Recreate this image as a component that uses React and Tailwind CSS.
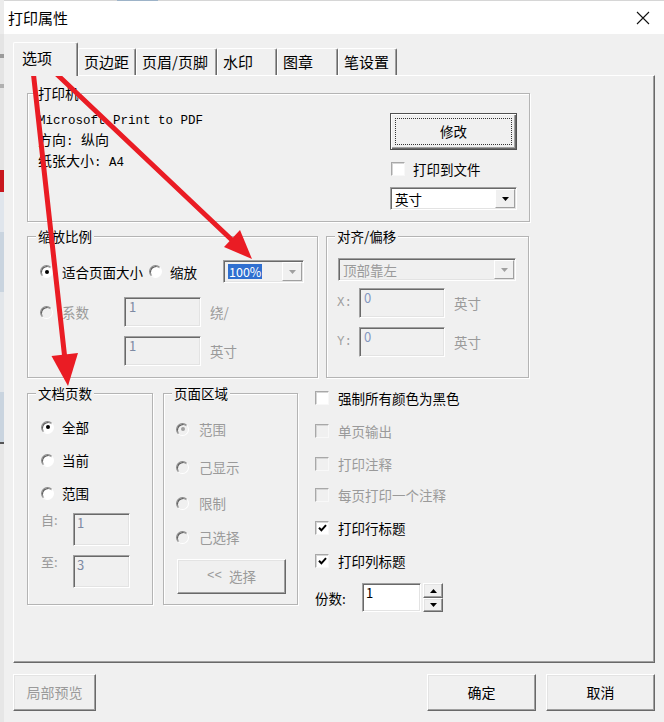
import React from "react";

const Radio = ({ checked, disabled }) => (
  <span
    className={`inline-flex h-[13px] w-[13px] shrink-0 items-center justify-center rounded-full border border-t-[#8a8a8a] border-l-[#8a8a8a] border-b-white border-r-white shadow-[inset_1px_1px_0_#5f5f5f] ${
      disabled ? "bg-[#f0f0f0]" : "bg-white"
    }`}
  >
    {checked && (
      <span className={`h-[4px] w-[4px] rounded-full ${disabled ? "bg-[#a0a0a0]" : "bg-black"}`} />
    )}
  </span>
);

const Check = ({ checked, disabled }) => (
  <span
    className={`inline-flex h-[14px] w-[14px] shrink-0 items-center justify-center border border-t-[#a8a8a8] border-l-[#a8a8a8] border-b-[#f8f8f8] border-r-[#f8f8f8] shadow-[inset_1px_1px_0_#d6d6d6] ${
      disabled ? "bg-[#f0f0f0]" : "bg-white"
    }`}
  >
    {checked && (
      <svg width="9" height="8" viewBox="0 0 9 8">
        <path d="M1 3.8 L3.4 6.3 L8 1.2" stroke="#000" strokeWidth="2" fill="none" />
      </svg>
    )}
  </span>
);

const Sunken = ({ className, white, children }) => (
  <div
    className={`shrink-0 border border-t-[#a0a0a0] border-l-[#a0a0a0] border-b-white border-r-white shadow-[inset_1px_1px_0_#696969,inset_-1px_-1px_0_#e3e3e3] ${
      white ? "bg-white" : "bg-[#f0f0f0]"
    } ${className}`}
  >
    {children}
  </div>
);

const Raised = ({ className, children }) => (
  <div
    className={`flex shrink-0 items-center justify-center border border-t-white border-l-white border-b-[#696969] border-r-[#696969] bg-[#f0f0f0] shadow-[inset_-1px_-1px_0_#a0a0a0,inset_1px_1px_0_#e3e3e3] ${className}`}
  >
    {children}
  </div>
);

const DropBtn = ({ disabled }) => (
  <span className="ml-auto flex h-full w-[20px] shrink-0 items-center justify-center border border-t-white border-l-white border-b-[#a0a0a0] border-r-[#a0a0a0] bg-[#f0f0f0]">
    <svg width="7" height="4" viewBox="0 0 7 4">
      <path d="M0 0H7L3.5 4Z" fill={disabled ? "#a0a0a0" : "#000"} />
    </svg>
  </span>
);

const Group = ({ title, className, children }) => (
  <div
    className={`relative shrink-0 border border-[#b4b4b4] shadow-[inset_1px_1px_0_#fff,1px_1px_0_#fff] ${className}`}
  >
    <span className="absolute -top-[11px] left-[8px] bg-[#f0f0f0] px-[2px] text-[13.5px] leading-[20px] text-black">
      {title}
    </span>
    {children}
  </div>
);

const Tab = ({ label, selected, className }) => (
  <div
    className={`flex shrink-0 items-center rounded-t-[2px] border-l border-t border-r border-l-white border-t-white border-r-[#696969] bg-[#f0f0f0] text-[15px] shadow-[inset_-1px_0_0_#a0a0a0] ${
      selected ? "relative z-10 -mb-[1px] h-[34px] pb-[3px] pl-[8px]" : "h-[27px] pl-[5px]"
    } ${className}`}
  >
    {label}
  </div>
);

const CheckRow = ({ label, checked, disabled, className }) => (
  <div className={`flex h-[20px] items-center ${className}`}>
    <Check checked={checked} disabled={disabled} />
    <span className={`ml-[9px] text-[13.5px] leading-[20px] ${disabled ? "text-[#9a9a9a]" : "text-black"}`}>
      {label}
    </span>
  </div>
);

const RadioRow = ({ label, checked, disabled, gap, className }) => (
  <div className={`flex h-[20px] items-center ${className}`}>
    <Radio checked={checked} disabled={disabled} />
    <span
      className={`text-[13.5px] leading-[20px] ${gap ? "ml-[10px]" : "ml-[8px]"} ${
        disabled ? "text-[#9a9a9a]" : "text-black"
      }`}
    >
      {label}
    </span>
  </div>
);

const mono = "font-['Liberation_Mono','Noto_Sans_CJK_SC',monospace]";

export default function App() {
  return (
    <div className="relative flex h-[722px] w-[664px] overflow-hidden bg-[#f0f0f0] font-['Noto_Sans_CJK_SC','Noto_Sans',sans-serif] text-black">
      {/* app behind the dialog */}
      <div className="flex w-[4px] shrink-0 flex-col bg-[#e4e4e4]">
        <div className="h-[34px] bg-[#ececec]" />
        <div className="mt-[20px] h-[4px] bg-[#9a9a9a]" />
        <div className="mt-[26px] h-[4px] bg-[#b0b0b0]" />
        <div className="mt-[82px] h-[22px] bg-[#c8161d]" />
        <div className="h-[40px] bg-[#dfe5ec]" />
        <div className="h-[60px] bg-[#c9d4df]" />
        <div className="h-[100px] bg-[#e2e6ea]" />
        <div className="h-[50px] bg-[#c9d4df]" />
        <div className="h-[2px] bg-[#555]" />
        <div className="flex-1 bg-[#e6e6e6]" />
      </div>

      <div className="flex flex-1 flex-col">
        {/* title bar */}
        <div className="flex h-[1px] bg-[#d6d6d6]">
          <span className="ml-[113px] w-[41px] bg-[#9db3c8]" />
        </div>
        <div className="flex h-[33px] items-center justify-between bg-white pl-[4px] pr-[14px]">
          <span className="text-[15px] leading-[20px]">打印属性</span>
          <svg width="14" height="14" viewBox="0 0 14 14">
            <path d="M1 1L13 13M13 1L1 13" stroke="#111" strokeWidth="1.1" />
          </svg>
        </div>

        {/* dialog body */}
        <div className="flex flex-1 flex-col px-[9px] pt-[8px]">
          {/* tabs */}
          <div className="relative z-10 flex h-[33px] items-end">
            <Tab label="选项" selected className="w-[65px]" />
            <Tab label="页边距" className="w-[58px]" />
            <Tab label="页眉/页脚" className="w-[81px]" />
            <Tab label="水印" className="w-[60px]" />
            <Tab label="图章" className="w-[61px]" />
            <Tab label="笔设置" className="w-[59px]" />
          </div>

          {/* tab panel */}
          <div className="flex h-[588px] flex-col border border-l-white border-t-white border-r-[#696969] border-b-[#696969] pl-[13px] pt-[17px] shadow-[inset_-1px_-1px_0_#a0a0a0]">
            {/* 打印机 */}
            <Group title="打印机" className="h-[129px] w-[503px]">
              <div className="flex pl-[10px] pt-[19px]">
                <div className={`-mt-[2px] w-[352px] text-[12.5px] leading-[20px] ${mono}`}>
                  <div>Microsoft Print to PDF</div>
                  <div>
                    <span className="text-[14px]">方向</span>: <span className="text-[14px]">纵向</span>
                  </div>
                  <div>
                    <span className="text-[14px]">纸张大小</span>: A4
                  </div>
                </div>
                <div className="flex w-[127px] flex-col">
                  <div className="relative flex h-[37px] w-[127px] items-center justify-center border border-[#4f4f4f] bg-[#f0f0f0] text-[13.5px] shadow-[inset_1px_1px_0_#fff,inset_-1px_-1px_0_#696969,inset_-2px_-2px_0_#a0a0a0]">
                    <span className="pointer-events-none absolute inset-[4px] border border-dotted border-[#333]" />
                    修改
                  </div>
                  <div className="mt-[12px] flex h-[14px] items-center pl-[1px]">
                    <Check />
                    <span className="ml-[8px] text-[13.5px] leading-[20px]">打印到文件</span>
                  </div>
                  <Sunken white className="mt-[11px] flex h-[23px] w-[127px] items-center p-[1px]">
                    <span className="pl-[3px] text-[13.5px] leading-[18px]">英寸</span>
                    <DropBtn />
                  </Sunken>
                </div>
              </div>
            </Group>

            {/* row 2 */}
            <div className="mt-[14px] flex gap-[8px]">
              <Group title="缩放比例" className="h-[142px] w-[291px]">
                <div className="ml-[12px] mt-[23px] flex h-[23px] items-center">
                  <Radio checked />
                  <span className="ml-[9px] w-[87px] text-[13.5px] leading-[20px]">适合页面大小</span>
                  <Radio />
                  <span className="ml-[8px] w-[53px] text-[13.5px] leading-[20px]">缩放</span>
                  <Sunken className="flex h-[23px] w-[81px] items-center p-[1px]">
                    <span className="ml-[3px] bg-[#2f6fd0] px-[1px] text-[12.5px] leading-[15px] text-white">
                      100%
                    </span>
                    <DropBtn disabled />
                  </Sunken>
                </div>
                <div className="ml-[12px] mt-[14px] flex items-center">
                  <Radio disabled />
                  <span className="ml-[9px] w-[62px] text-[13.5px] leading-[20px] text-[#9a9a9a]">系数</span>
                  <Sunken className="h-[30px] w-[77px] pl-[4px] text-[13px] leading-[17px] text-[#7d8aa3]">1</Sunken>
                  <span className="ml-[9px] text-[13.5px] leading-[20px] text-[#9a9a9a]">绕/</span>
                </div>
                <div className="ml-[96px] mt-[9px] flex items-center">
                  <Sunken className="h-[30px] w-[77px] pl-[4px] text-[13px] leading-[17px] text-[#7d8aa3]">1</Sunken>
                  <span className="ml-[9px] text-[13.5px] leading-[20px] text-[#9a9a9a]">英寸</span>
                </div>
              </Group>

              <Group title="对齐/偏移" className="h-[142px] w-[203px]">
                <Sunken className="ml-[11px] mt-[21px] flex h-[23px] w-[178px] items-center p-[1px]">
                  <span className="pl-[3px] text-[13.5px] leading-[18px] text-[#9a9a9a]">顶部靠左</span>
                  <DropBtn disabled />
                </Sunken>
                <div className="ml-[10px] mt-[7px] flex items-center">
                  <span className={`w-[22px] text-[12.5px] text-[#a0a0a0] ${mono}`}>X:</span>
                  <Sunken className="h-[30px] w-[86px] pl-[4px] text-[13px] leading-[17px] text-[#8498c0]">0</Sunken>
                  <span className="ml-[9px] text-[13.5px] leading-[20px] text-[#9a9a9a]">英寸</span>
                </div>
                <div className="ml-[10px] mt-[9px] flex items-center">
                  <span className={`w-[22px] text-[12.5px] text-[#a0a0a0] ${mono}`}>Y:</span>
                  <Sunken className="h-[30px] w-[86px] pl-[4px] text-[13px] leading-[17px] text-[#8498c0]">0</Sunken>
                  <span className="ml-[9px] text-[13.5px] leading-[20px] text-[#9a9a9a]">英寸</span>
                </div>
              </Group>
            </div>

            {/* row 3 */}
            <div className="mt-[15px] flex">
              <Group title="文档页数" className="h-[212px] w-[126px]">
                <div className="flex flex-col pl-[13px] pt-[23px]">
                  <RadioRow label="全部" checked />
                  <RadioRow label="当前" className="mt-[13px]" />
                  <RadioRow label="范围" className="mt-[13px]" />
                  <div className="mt-[10px] flex items-start">
                    <span className="-mt-[1px] w-[32px] text-[13px] leading-[16px] text-[#9a9a9a]">自:</span>
                    <Sunken className="h-[33px] w-[57px] pl-[3px] text-[13px] leading-[17px] text-[#7d8aa3]">1</Sunken>
                  </div>
                  <div className="mt-[9px] flex items-start">
                    <span className="-mt-[1px] w-[32px] text-[13px] leading-[16px] text-[#9a9a9a]">至:</span>
                    <Sunken className="h-[33px] w-[57px] pl-[3px] text-[13px] leading-[17px] text-[#7d8aa3]">3</Sunken>
                  </div>
                </div>
              </Group>

              <Group title="页面区域" className="ml-[10px] h-[212px] w-[135px]">
                <div className="flex flex-col pl-[12px] pt-[25px]">
                  <RadioRow label="范围" checked disabled gap />
                  <RadioRow label="己显示" disabled gap className="mt-[18px]" />
                  <RadioRow label="限制" disabled gap className="mt-[16px]" />
                  <RadioRow label="己选择" disabled gap className="mt-[14px]" />
                  <Raised className="ml-[1px] mt-[12px] h-[35px] w-[109px] gap-[7px] text-[13.5px] text-[#9a9a9a]">
                    <span className={`${mono} text-[12.5px]`}>&lt;&lt;</span>
                    <span>选择</span>
                  </Raised>
                </div>
              </Group>

              <div className="-mt-[5px] ml-[17px] flex flex-col">
                <CheckRow label="强制所有颜色为黑色" />
                <CheckRow label="单页输出" disabled className="mt-[13px]" />
                <CheckRow label="打印注释" disabled className="mt-[13px]" />
                <CheckRow label="每页打印一个注释" disabled className="mt-[11px]" />
                <CheckRow label="打印行标题" checked className="mt-[13px]" />
                <CheckRow label="打印列标题" checked className="mt-[13px]" />
                <div className="mt-[12px] flex h-[29px] items-center">
                  <span className="w-[47px] text-[13.5px] leading-[20px]">份数:</span>
                  <Sunken white className="h-[29px] w-[59px] pl-[3px] text-[13px] leading-[18px]">1</Sunken>
                  <div className="ml-[2px] flex h-[29px] w-[20px] flex-col">
                    <Raised className="h-[15px] w-[20px]">
                      <svg width="7" height="4" viewBox="0 0 7 4">
                        <path d="M0 4H7L3.5 0Z" fill="#000" />
                      </svg>
                    </Raised>
                    <Raised className="h-[14px] w-[20px]">
                      <svg width="7" height="4" viewBox="0 0 7 4">
                        <path d="M0 0H7L3.5 4Z" fill="#000" />
                      </svg>
                    </Raised>
                  </div>
                </div>
              </div>
            </div>
          </div>

          {/* bottom buttons */}
          <div className="mt-[11px] flex h-[37px]">
            <Raised className="h-[37px] w-[83px] text-[14px] text-[#9a9a9a]">局部预览</Raised>
            <Raised className="ml-auto h-[37px] w-[109px] text-[14px]">确定</Raised>
            <Raised className="ml-[10px] h-[37px] w-[109px] text-[14px]">取消</Raised>
          </div>
        </div>
      </div>

      {/* red annotation arrows */}
      <svg className="pointer-events-none absolute inset-0" width="664" height="722" viewBox="0 0 664 722">
        <line x1="33" y1="70" x2="64.8" y2="358" stroke="#ea1c24" strokeWidth="5" strokeLinecap="round" />
        <polygon points="68,386 51.5,356 78,353" fill="#ea1c24" />
        <line x1="46" y1="64" x2="234" y2="242" stroke="#ea1c24" strokeWidth="5" strokeLinecap="round" />
        <polygon points="252,259 224,247 240,230" fill="#ea1c24" />
      </svg>
    </div>
  );
}
